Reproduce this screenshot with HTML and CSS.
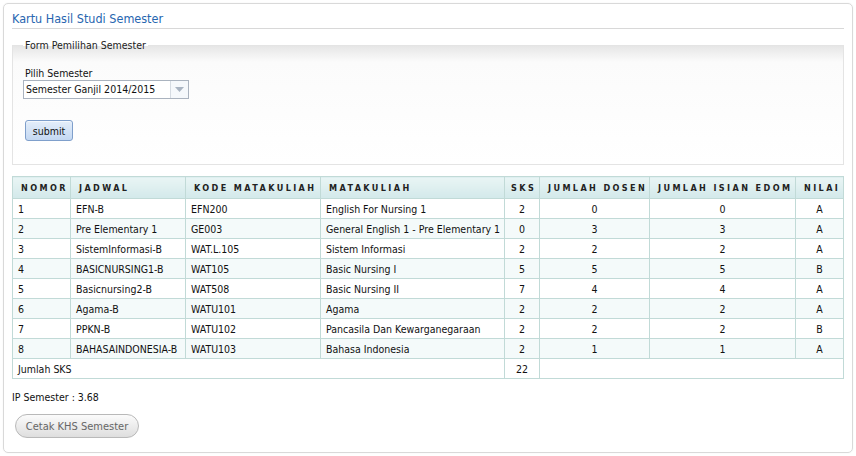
FILE: index.html
```html
<!DOCTYPE html>
<html>
<head>
<meta charset="utf-8">
<link rel="stylesheet" href="styles.css">
</head>
<body>
<div class="panel">
  <h2 class="title">Kartu Hasil Studi Semester</h2>
  <fieldset class="form-box">
    <legend class="legend">Form Pemilihan Semester</legend>
    <div class="label">Pilih Semester</div>
    <div class="select">
      <span class="select-text">Semester Ganjil 2014/2015</span>
      <span class="select-arrow"><svg width="9" height="5" viewBox="0 0 9 5"><path d="M0 0h9L4.5 5z" fill="#a9b4c2"/></svg></span>
    </div>
    <div class="actions"><button class="btn-submit">submit</button></div>
  </fieldset>

  <table class="khs">
    <colgroup>
      <col style="width:58px"><col style="width:115px"><col style="width:135px"><col style="width:184px">
      <col style="width:35px"><col style="width:110px"><col style="width:146px"><col style="width:48px">
    </colgroup>
    <thead>
      <tr>
        <th>NOMOR</th><th>JADWAL</th><th>KODE MATAKULIAH</th><th>MATAKULIAH</th>
        <th class="c">SKS</th><th>JUMLAH DOSEN</th><th>JUMLAH ISIAN EDOM</th><th>NILAI</th>
      </tr>
    </thead>
    <tbody>
      <tr><td>1</td><td>EFN-B</td><td>EFN200</td><td>English For Nursing 1</td><td class="c">2</td><td class="c">0</td><td class="c">0</td><td class="c">A</td></tr>
      <tr class="alt"><td>2</td><td>Pre Elementary 1</td><td>GE003</td><td>General English 1 - Pre Elementary 1</td><td class="c">0</td><td class="c">3</td><td class="c">3</td><td class="c">A</td></tr>
      <tr><td>3</td><td>SistemInformasi-B</td><td>WAT.L.105</td><td>Sistem Informasi</td><td class="c">2</td><td class="c">2</td><td class="c">2</td><td class="c">A</td></tr>
      <tr class="alt"><td>4</td><td>BASICNURSING1-B</td><td>WAT105</td><td>Basic Nursing I</td><td class="c">5</td><td class="c">5</td><td class="c">5</td><td class="c">B</td></tr>
      <tr><td>5</td><td>Basicnursing2-B</td><td>WAT508</td><td>Basic Nursing II</td><td class="c">7</td><td class="c">4</td><td class="c">4</td><td class="c">A</td></tr>
      <tr class="alt"><td>6</td><td>Agama-B</td><td>WATU101</td><td>Agama</td><td class="c">2</td><td class="c">2</td><td class="c">2</td><td class="c">A</td></tr>
      <tr><td>7</td><td>PPKN-B</td><td>WATU102</td><td>Pancasila Dan Kewarganegaraan</td><td class="c">2</td><td class="c">2</td><td class="c">2</td><td class="c">B</td></tr>
      <tr class="alt"><td>8</td><td>BAHASAINDONESIA-B</td><td>WATU103</td><td>Bahasa Indonesia</td><td class="c">2</td><td class="c">1</td><td class="c">1</td><td class="c">A</td></tr>
      <tr><td colspan="4">Jumlah SKS</td><td class="c">22</td><td colspan="3"></td></tr>
    </tbody>
  </table>

  <p class="ip">IP Semester : 3.68</p>
  <button class="btn-print">Cetak KHS Semester</button>
</div>
</body>
</html>
```

FILE: styles.css
```css
html, body {
  margin: 0;
  padding: 0;
  background: #fff;
}
body {
  font-family: "DejaVu Sans Condensed", "DejaVu Sans", Verdana, sans-serif;
  font-size: 10.5px;
  color: #111;
}
.panel {
  margin: 3px;
  height: 450px;
  box-sizing: border-box;
  border: 1px solid #d9d9d9;
  border-radius: 5px;
  padding: 0 8px;
  box-shadow: 0 0 2px rgba(0,0,0,0.06);
}
.title {
  margin: 0;
  padding: 7px 0 1px 0;
  font-size: 12.5px;
  font-weight: normal;
  line-height: 16px;
  color: #2766b0;
  border-bottom: 1px solid #d8d8d8;
}
.form-box {
  margin: 10px 0 0 0;
  padding: 8px 10px 23px 10px;
  border: 1px solid #e4e4e4;
  background: linear-gradient(#e6e6e6 0px, #fbfbfb 16px, #fff 100%);
}
.legend {
  padding: 0 2px;
  margin: 0;
  line-height: 12px;
  color: #222;
}
.label {
  margin-left: 2px;
  line-height: 14px;
  margin-top: 7px;
}
.select {
  display: flex;
  width: 166px;
  height: 19px;
  box-sizing: border-box;
  margin-top: 0;
  border: 1px solid #aab3bf;
  background: #fff;
}
.select-text {
  flex: 1;
  line-height: 17px;
  padding-left: 2px;
  color: #111;
}
.select-arrow {
  width: 17px;
  border-left: 1px solid #d5dbe2;
  background: #f5f8fb;
  display: flex;
  align-items: center;
  justify-content: center;
}
.actions {
  margin-top: 21px;
  padding-left: 2px;
}
.btn-submit {
  font-family: inherit;
  font-size: 10.5px;
  color: #111;
  width: 48px;
  height: 21px;
  padding: 0;
  border: 1px solid #7f9fcb;
  border-radius: 3px;
  background: linear-gradient(#e4eefa, #c4d8f2);
  box-shadow: inset 0 1px 0 #f4f8fd;
}
.khs {
  margin-top: 11px;
  width: 831px;
  table-layout: fixed;
  border-collapse: collapse;
}
.khs th {
  height: 21px;
  padding: 0 0 0 8px;
  text-align: left;
  font-size: 9px;
  font-weight: bold;
  letter-spacing: 2.4px;
  color: #222;
  white-space: nowrap;
  overflow: hidden;
  border: 1px solid #c1dad7;
  background: linear-gradient(#e9f5f5, #d3e9ea);
}
.khs th.c {
  padding-left: 6px;
}
.khs td {
  height: 19px;
  padding: 0 0 0 5px;
  line-height: 14px;
  border: 1px solid #c1dad7;
  background: #fff;
  color: #111;
  white-space: nowrap;
  overflow: hidden;
}
.khs tr.alt td {
  background: #f4fafa;
}
.khs td.c {
  text-align: center;
  padding: 0;
}
.ip {
  margin: 11px 0 0 0;
  line-height: 14px;
}
.btn-print {
  margin: 10px 0 0 3px;
  width: 124px;
  height: 24px;
  padding: 0;
  font-family: inherit;
  font-size: 11px;
  color: #666;
  border: 1px solid #b9b9b9;
  border-radius: 12px;
  background: linear-gradient(#fbfbfb, #dedede);
}
```
